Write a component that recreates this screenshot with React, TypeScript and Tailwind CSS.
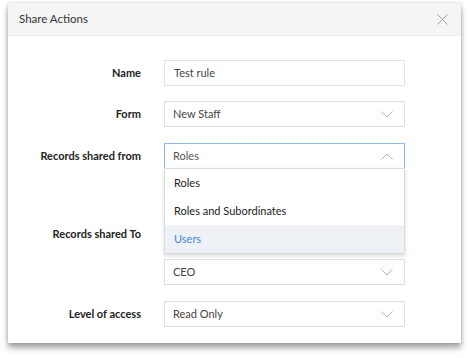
const Chevron = ({ up = false }: { up?: boolean }) => (
  <svg width="12" height="7" viewBox="0 0 12 7" className="shrink-0">
    <path
      d={up ? "M0.5 6.5 L6 1 L11.5 6.5" : "M0.5 0.5 L6 6 L11.5 0.5"}
      fill="none"
      stroke="#b5b5b5"
      strokeWidth="1"
    />
  </svg>
);

const Label = ({ children }: { children: React.ReactNode }) => (
  <div className="w-[133px] shrink-0 text-right text-[11px] font-bold text-[#222]">{children}</div>
);

const SelectBox = ({ value }: { value?: string }) => (
  <div className="flex h-[26px] w-[241px] items-center justify-between border border-[#dedede] bg-white pl-[8px] pr-[11px] text-[11px] text-[#444]">
    <span>{value}</span>
    <Chevron />
  </div>
);

const options = ["Roles", "Roles and Subordinates", "Users"];

export default function App() {
  return (
    <div className="min-h-[358px] w-[469px] bg-white pt-[3px] font-['Lato','Open_Sans',sans-serif]">
      <div className="mx-[8px] w-[453px] bg-white shadow-[0_0_3px_rgba(0,0,0,0.18),0_5px_6px_rgba(0,0,0,0.35)]">
        {/* Header */}
        <div className="flex h-[33px] items-center justify-between border-b border-[#ececec] bg-[#f5f5f5] pl-[11px] pr-[13px]">
          <span className="text-[11.5px] text-[#333]">Share Actions</span>
          <svg width="11" height="11" viewBox="0 0 11 11">
            <path d="M0.5 0.5 L10.5 10.5 M10.5 0.5 L0.5 10.5" stroke="#9a9a9a" strokeWidth="1" fill="none" />
          </svg>
        </div>

        {/* Body */}
        <div className="flex flex-col pb-[16px] pt-[24px]">
          <div className="flex items-center gap-[23px]">
            <Label>Name</Label>
            <div className="flex h-[26px] w-[241px] items-center border border-[#e3e3e3] bg-white pl-[9px] text-[11px] text-[#444]">
              Test rule
            </div>
          </div>

          <div className="mt-[15px] flex items-center gap-[23px]">
            <Label>Form</Label>
            <SelectBox value="New Staff" />
          </div>

          <div className="mt-[16px] flex items-start gap-[23px]">
            <div className="pt-[5px]">
              <Label>Records shared from</Label>
            </div>
            <div className="relative">
              <div className="flex h-[25px] w-[241px] items-center justify-between border border-b-0 border-[#8cb8ea] bg-white pl-[8px] pr-[11px] text-[11px] text-[#555]">
                <span>Roles</span>
                <Chevron up />
              </div>
              {/* Dropdown menu */}
              <div className="absolute left-0 top-full z-10 w-[241px] border border-[#dcdcdc] bg-white shadow-[0_2px_4px_rgba(0,0,0,0.15)]">
                {options.map((o) => (
                  <div
                    key={o}
                    className={
                      o === "Users"
                        ? "flex h-[28px] items-center bg-[#eef2f7] pl-[9px] text-[11px] text-[#3f88d6]"
                        : "flex h-[28px] items-center pl-[9px] text-[11px] text-[#222]"
                    }
                  >
                    {o}
                  </div>
                ))}
              </div>
            </div>
          </div>

          <div className="mt-[53px] flex items-center gap-[23px]">
            <Label>Records shared To</Label>
            <SelectBox />
          </div>

          <div className="mt-[12px] flex items-center gap-[23px]">
            <div className="w-[133px] shrink-0" />
            <SelectBox value="CEO" />
          </div>

          <div className="mt-[16px] flex items-center gap-[23px]">
            <Label>Level of access</Label>
            <SelectBox value="Read Only" />
          </div>
        </div>
      </div>
    </div>
  );
}
